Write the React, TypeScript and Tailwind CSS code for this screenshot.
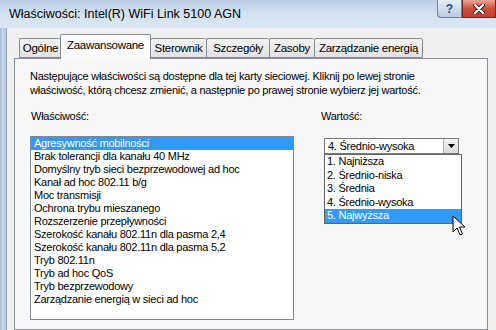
import React from 'react';

const tabs = [
  { label: 'Ogólne', w: 'w-[42px]' },
  { label: 'Zaawansowane', w: 'w-[91px]', active: true },
  { label: 'Sterownik', w: 'w-[56px]' },
  { label: 'Szczegóły', w: 'w-[63px]' },
  { label: 'Zasoby', w: 'w-[45px]' },
  { label: 'Zarządzanie energią', w: 'w-[109px]' },
];

const props = [
  'Agresywność mobilności',
  'Brak tolerancji dla kanału 40 MHz',
  'Domyślny tryb sieci bezprzewodowej ad hoc',
  'Kanał ad hoc 802.11 b/g',
  'Moc transmisji',
  'Ochrona trybu mieszanego',
  'Rozszerzenie przepływności',
  'Szerokość kanału 802.11n dla pasma 2,4',
  'Szerokość kanału 802.11n dla pasma 5,2',
  'Tryb 802.11n',
  'Tryb ad hoc QoS',
  'Tryb bezprzewodowy',
  'Zarządzanie energią w sieci ad hoc',
];

const values = ['1. Najniższa', '2. Średnio-niska', '3. Średnia', '4. Średnio-wysoka', '5. Najwyższa'];

const App: React.FC = () => {
  return (
    <div
      className="relative w-[496px] h-[330px] overflow-hidden flex flex-col bg-[#c9dbed] text-black"
      style={{ fontFamily: '"Liberation Sans", Arial, sans-serif' }}
    >
      {/* title bar */}
      <div className="h-[28px] flex items-start bg-gradient-to-b from-[#b9cee3] via-[#d3e2f1] to-[#dae6f3]">
        <div className="pl-[9px] pt-[6px] text-[12.5px] leading-[16px] text-black whitespace-nowrap">
          Właściwości: Intel(R) WiFi Link 5100 AGN
        </div>
        <div className="ml-auto flex">
          <div className="w-[25px] h-[18px] border border-[#6b7f96] border-t-0 rounded-bl-[4px] bg-gradient-to-b from-[#e6eef7] to-[#b9cbe0] flex items-center justify-center text-[12px] text-[#2d4a6a] font-bold">
            ?
          </div>
          <div className="w-[34px] h-[18px] border border-[#6e2a2a] border-t-0 bg-gradient-to-b from-[#e8a593] via-[#c9503c] to-[#c2402f] flex items-center justify-center">
            <svg width="12" height="10" viewBox="0 0 12 10">
              <path d="M2 1 L10 9 M10 1 L2 9" stroke="#4a1a14" strokeWidth="4" strokeLinecap="round" />
              <path d="M2 1 L10 9 M10 1 L2 9" stroke="#ffffff" strokeWidth="2.2" strokeLinecap="round" />
            </svg>
          </div>
        </div>
      </div>

      <div className="flex flex-1">
        {/* left frame */}
        <div className="w-[7px] bg-gradient-to-r from-[#a6bcd4] via-[#c6d7ea] to-[#b3c7dc] border-r border-[#8ea4bd]" />
        {/* client */}
        <div className="flex-1 bg-[#f0f0f0] pt-[5px] pl-[7px] pr-[8px] flex flex-col">
          <div className="flex items-end pl-[5px] h-[25px] relative z-10 text-[11.5px] tracking-[-0.3px] whitespace-nowrap">
            {tabs.map((t) =>
              t.active ? (
                <div
                  key={t.label}
                  className={`${t.w} h-[25px] -mb-px -mx-[1px] border border-b-0 border-[#898c95] bg-[#fbfbfb] flex items-start justify-center pt-[3px] leading-[15px] rounded-t-[2px]`}
                >
                  {t.label}
                </div>
              ) : (
                <div
                  key={t.label}
                  className={`${t.w} h-[20px] border border-r-0 last:border-r border-[#898c95] bg-gradient-to-b from-[#f3f3f3] to-[#e2e2e2] flex items-center justify-center leading-[15px] rounded-t-[2px]`}
                >
                  {t.label}
                </div>
              )
            )}
          </div>
          <div className="flex-1 border border-[#898c95] bg-[#f7f7f7] pl-[15px] pt-[10px] text-[11px] tracking-[-0.25px]">
            <div className="leading-[14px] whitespace-nowrap">
              Następujące właściwości są dostępne dla tej karty sieciowej. Kliknij po lewej stronie
              <br />
              właściwość, którą chcesz zmienić, a następnie po prawej stronie wybierz jej wartość.
            </div>
            <div className="flex mt-[12px]">
              <div className="w-[264px] flex flex-col">
                <div className="leading-[14px] h-[14px] mb-[13px] pl-[1px]">Właściwość:</div>
                <div className="h-[184px] border border-[#828790] bg-white flex flex-col">
                  {props.map((p, i) => (
                    <div
                      key={p}
                      className={`h-[13px] leading-[13px] pl-[3px] whitespace-nowrap ${i === 0 ? 'bg-[#3399ff] text-white' : ''}`}
                    >
                      {p}
                    </div>
                  ))}
                </div>
              </div>
              <div className="ml-[27px] flex flex-col relative">
                <div className="leading-[14px] h-[14px] mb-[15px]">Wartość:</div>
                <div className="ml-[3px] w-[135px] h-[16px] border border-[#7a7a7a] bg-white flex items-center">
                  <div className="flex-1 pl-[3px] leading-[14px]">4. Średnio-wysoka</div>
                  <div className="w-[15px] h-[14px] border-l border-[#acacac] bg-gradient-to-b from-[#f2f2f2] to-[#dcdcdc] flex items-center justify-center">
                    <svg width="7" height="4" viewBox="0 0 7 4">
                      <path d="M0 0 H7 L3.5 4 Z" fill="#000" />
                    </svg>
                  </div>
                </div>
                <div className="absolute left-[3px] top-[45px] w-[138px] h-[70px] border border-[#646464] bg-white flex flex-col z-20">
                  {values.map((v, i) => (
                    <div
                      key={v}
                      className={`h-[13.6px] leading-[13.6px] pl-[2px] whitespace-nowrap ${i === 4 ? 'bg-[#3399ff] text-white' : ''}`}
                    >
                      {v}
                    </div>
                  ))}
                </div>
              </div>
            </div>
          </div>
        </div>
      </div>

      {/* mouse cursor */}
      <svg className="absolute left-[452px] top-[215px] z-30" width="14" height="22" viewBox="0 0 14 22">
        <path
          d="M1 1 L1 17 L5 13 L8 20 L10.5 19 L7.5 12 L13 12 Z"
          fill="#fff"
          stroke="#000"
          strokeWidth="1"
          strokeLinejoin="round"
        />
      </svg>
    </div>
  );
};

export default App;
